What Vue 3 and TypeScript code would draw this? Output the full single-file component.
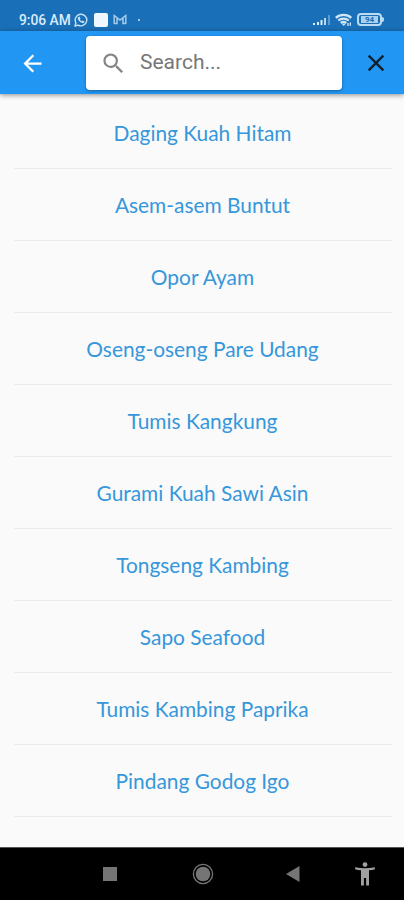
<script setup lang="ts">
import { ref } from 'vue'

const query = ref<string>('')
const recipes: string[] = [
  'Daging Kuah Hitam',
  'Asem-asem Buntut',
  'Opor Ayam',
  'Oseng-oseng Pare Udang',
  'Tumis Kangkung',
  'Gurami Kuah Sawi Asin',
  'Tongseng Kambing',
  'Sapo Seafood',
  'Tumis Kambing Paprika',
  'Pindang Godog Igo',
]
</script>

<template>
  <div class="screen">
    <div class="status">
      <span class="clock">9:06 AM</span>
      <svg class="whatsapp" viewBox="0 0 14 14" width="14" height="14">
        <path d="M1 13l.9-3.2A5.8 5.8 0 1 1 4.200 12.100z" fill="none" stroke="#c6e1f5" stroke-width="1.4" stroke-linejoin="round" />
        <path d="M4.500 4.100l1-.5 1 1.900-.6.9c.5 1 1 1.400 1.900 1.800l.8-.7 1.800.9c0 1.200-1 1.800-2 1.600-2.300-.5-4.400-2.600-4.600-4.500-.1-.6.2-1.100.7-1.400z" fill="#c6e1f5" />
      </svg>
      <span class="app-badge"></span>
      <svg class="mail" viewBox="0 0 14 11" width="14" height="11">
        <path d="M1.200 9.800V1.500L7 6l5.800-4.500V9.800M4 10V4M10 10V4M1 9.500h3.500M9.500 9.500H13" fill="none" stroke="#a5cbe8" stroke-width="1.500" />
      </svg>
      <span class="more-dot"></span>
      <span class="spacer"></span>
      <svg class="signal" viewBox="0 0 18 12" width="18" height="12">
        <path d="M0 9h2v2H0zM4 8h2v3H4zM7.500 6h2v5h-2z" fill="#d8ecfa" />
        <path d="M11 4h2v7h-2z" fill="#b5d6ef" />
        <path d="M15 1h2v10h-2z" fill="#5d9dce" />
      </svg>
      <svg class="wifi" viewBox="0 0 18 14" width="18" height="14">
        <path d="M.8 4.800a11.500 11.500 0 0 1 15.500 0M3.300 7.500a8 8 0 0 1 10.500 0M5.800 10a4.500 4.500 0 0 1 5.500 0" fill="none" stroke="#cfe6f7" stroke-width="2.300" />
        <path d="M6.500 10.500h4.500L8.700 13z" fill="#cfe6f7" />
        <path d="M13 13V10M15.300 9.500v3.200" stroke="#cfe6f7" stroke-width="1.300" />
      </svg>
      <div class="battery"><span>94</span></div>
      <span class="battery-tip"></span>
    </div>

    <header class="bar">
      <button class="icon-btn" aria-label="Back">
        <svg viewBox="0 0 24 24" width="27" height="27">
          <path d="M20 11H7.830l5.590-5.590L12 4l-8 8 8 8 1.410-1.410L7.830 13H20v-2z" fill="#fff" />
        </svg>
      </button>
      <label class="search">
        <svg viewBox="0 0 24 24" width="27" height="27">
          <path d="M15.500 14h-.79l-.28-.27A6.471 6.471 0 0 0 16 9.500 6.500 6.500 0 1 0 9.500 16c1.610 0 3.090-.59 4.230-1.570l.27.28v.79l5 4.990L20.490 19l-4.990-5zm-6 0C7.010 14 5 11.990 5 9.500S7.010 5 9.500 5 14 7.010 14 9.500 11.990 14 9.500 14z" fill="#858585" />
        </svg>
        <input v-model="query" type="text" placeholder="Search..." />
      </label>
      <button class="icon-btn close" aria-label="Clear" @click="query = ''">
        <svg viewBox="0 0 24 24" width="28" height="28">
          <path d="M19 6.410L17.590 5 12 10.590 6.410 5 5 6.410 10.590 12 5 17.590 6.410 19 12 13.410 17.590 19 19 17.590 13.410 12z" fill="#10202d" />
        </svg>
      </button>
    </header>

    <ul class="list">
      <li v-for="name in recipes" :key="name">{{ name }}</li>
    </ul>

    <nav class="nav">
      <svg class="recents" viewBox="0 0 14 14" width="14" height="14"><path d="M0 0h14v14H0z" fill="#757575" /></svg>
      <svg class="home" viewBox="0 0 22 22" width="22" height="22">
        <circle cx="11" cy="11" r="9.600" fill="none" stroke="#757575" stroke-width="1.300" />
        <circle cx="11" cy="11" r="7.300" fill="#757575" />
      </svg>
      <svg class="back" viewBox="0 0 14 16" width="14" height="16"><path d="M0 8L13.500 0v16z" fill="#757575" /></svg>
      <svg class="access" viewBox="0 0 20 24" width="20" height="24">
        <circle cx="10" cy="2.600" r="2.400" fill="#a0a0a0" />
        <path d="M.3 5.200c6 1.400 13.400 1.400 19.400 0l.3 2c-2 .6-4 .9-6 1.100V23.500h-2.900V16H8.900v7.500H6V8.300C4 8.100 2 7.800 0 7.200z" fill="#a0a0a0" />
      </svg>
    </nav>
  </div>
</template>

<style>
body {
  margin: 0;
}
</style>

<style scoped>
.screen {
  width: 404px;
  height: 900px;
  display: flex;
  flex-direction: column;
  overflow: hidden;
  background: #fafafa;
  font-family: Roboto, sans-serif;
}
.status {
  flex: none;
  height: 31px;
  box-sizing: border-box;
  padding: 8px 20px 0 19px;
  display: flex;
  align-items: center;
  background: #1a70b8;
}
.clock {
  width: 55px;
  font-size: 13.8px;
  font-weight: 500;
  line-height: 18px;
  white-space: nowrap;
  color: #d9ecfb;
}
.app-badge {
  width: 14px;
  height: 14px;
  margin-left: 6px;
  border-radius: 2px;
  background: #eef6fe;
}
.mail {
  margin-left: 5px;
}
.more-dot {
  width: 2px;
  height: 2px;
  margin-left: 11px;
  border-radius: 1px;
  background: #cde4f6;
}
.spacer {
  flex: 1;
}
.wifi {
  margin: 0 4px;
}
.battery {
  width: 25px;
  height: 13px;
  box-sizing: border-box;
  border: 2px solid #b9dbf3;
  border-radius: 4px;
  padding: 1px 2px;
  display: flex;
}
.battery span {
  flex: 1;
  background: #a9d0ed;
  color: #1a70b8;
  font-size: 8px;
  font-weight: 700;
  line-height: 7px;
  text-align: center;
}
.battery-tip {
  width: 2px;
  height: 5px;
  border-radius: 0 2px 2px 0;
  background: #b9dbf3;
}
.bar {
  flex: none;
  height: 63px;
  box-sizing: border-box;
  padding: 5px 14px 4px 18.5px;
  display: flex;
  align-items: center;
  background: #2196f3;
  box-shadow: 0 1px 5px rgba(0, 0, 0, 0.45);
}
.icon-btn {
  padding: 0;
  border: 0;
  background: none;
  display: flex;
}
.search {
  width: 256px;
  height: 54px;
  box-sizing: border-box;
  margin-left: 40.5px;
  padding-left: 13.5px;
  display: flex;
  align-items: center;
  border-radius: 4px;
  background: #fff;
  box-shadow: 0 1px 3px rgba(0, 0, 0, 0.35);
}
.search input {
  width: 180px;
  margin-left: 13.5px;
  padding: 0 0 2px;
  border: 0;
  outline: 0;
  background: none;
  font: 400 21px/26px Roboto, sans-serif;
  color: #333;
}
.search input::placeholder {
  color: #777;
  opacity: 1;
}
.close {
  margin-left: auto;
}
.list {
  flex: 1;
  margin: 0;
  padding: 3px 12px 0 14px;
  list-style: none;
}
.list li {
  height: 72px;
  box-sizing: border-box;
  padding-right: 1px;
  border-bottom: 1px solid #ebebeb;
  text-align: center;
  font: 400 20.9px/72px Lato, sans-serif;
  color: #3697da;
}
.nav {
  flex: none;
  height: 53px;
  box-sizing: border-box;
  padding-left: 103px;
  border-top: 1px solid #555;
  display: flex;
  align-items: center;
  background: #000;
}
.home {
  margin-left: 75px;
}
.back {
  margin-left: 72px;
}
.access {
  margin-left: 55px;
}
</style>
